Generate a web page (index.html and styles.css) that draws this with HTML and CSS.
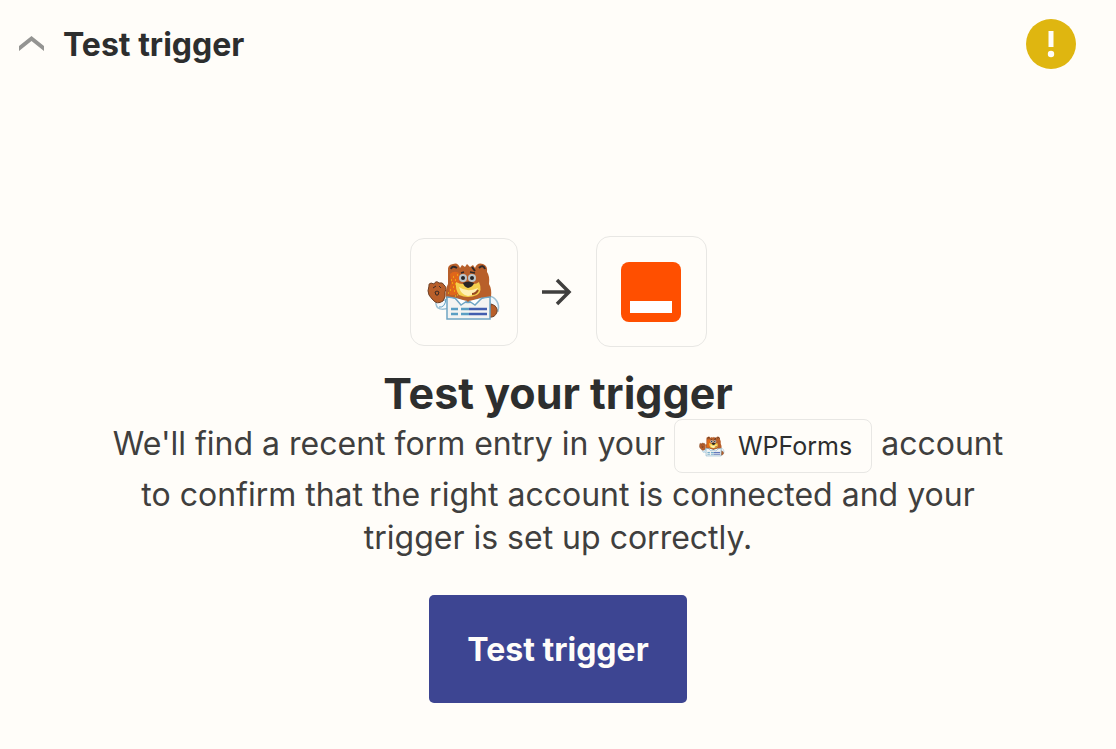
FILE: index.html
```
<!DOCTYPE html>
<html lang="en">
<head>
    <meta charset="UTF-8">
    <meta name="viewport" content="width=device-width, initial-scale=1.0">
    <title>Test trigger</title>
    <link rel="stylesheet" href="styles.css">
</head>
<body>
    <!-- bear logo, used in the card and in the account chip -->
    <svg class="defs" aria-hidden="true">
        <symbol id="bear" viewBox="0 0 74 60">
            <path d="M9 39 C8 48 16 49 23 45 L23 35 L18 38 Z M62 34 C69 35 73 42 71 49 L64 46 Z" fill="#f4f8fa" stroke="#9cc1d5" stroke-width="1.5"/>
            <path d="M12 45 Q18 46 19 37" fill="none" stroke="#5a9fc4" stroke-width="1"/>
            <path d="M64 42 Q71 44 70 50 Q68 56 62 55 Z" fill="#b85f2a" stroke="#6d4027" stroke-width="1"/>
            <path d="M2 24 Q1 22 4 21 L7 22 Q9 18 12 21 Q16 20 17 23 Q20 25 18 30 Q19 35 16 39 Q10 43 6 38 Q4 36 2 33 Q0 29 2 24 Z" fill="#b85f2a" stroke="#6d4027" stroke-width="1"/>
            <path d="M6 26 L9 24 M12 24 L14 26 M8 30 Q10 28 12 30 L11 33 L9 33 Z" fill="none" stroke="#3a2a25" stroke-width="1"/>
            <path d="M21 9 Q20 3 26 2 Q31 0 33 6 L35 3 L38 5 L40 2 L43 5 L46 3 L48 6 Q50 0 56 2 Q61 4 60 10 Q63 14 62 22 Q65 27 64 35 Q55 41 42 41 Q28 40 19 36 Q18 27 21 22 Z" fill="#b85f2a"/>
            <path d="M23 12 Q27 8 32 11 L33 29 Q30 34 23 33 Q21 27 24 21 Z" fill="#e0661a"/>
            <path d="M24 7 Q25 3 30 6 M52 6 Q56 2 58 7 M45 5 L48 9" fill="none" stroke="#30292a" stroke-width="2"/>
            <path d="M29 20 Q36 24 41 20 Q47 24 52 20 Q56 29 50 33 Q41 37 32 33 Q28 27 29 20 Z" fill="#f4cf4d"/>
            <path d="M32 25 Q40 31 51 26 Q49 33 41 34 Q34 33 32 25 Z" fill="#fff0b5"/>
            <circle cx="36" cy="16" r="4" fill="#bcc6cb"/>
            <circle cx="45" cy="16" r="4" fill="#bcc6cb"/>
            <circle cx="36" cy="16" r="2" fill="#262424"/>
            <circle cx="45" cy="16" r="2" fill="#262424"/>
            <path d="M34 11 L37 10 M43 10 L48 11" stroke="#30292a" stroke-width="1.5"/>
            <path d="M36 21 Q41 18 47 21 Q46 25 41 26 Q37 25 36 21 Z" fill="#292525"/>
            <path d="M45 32 Q49 32 51 28" fill="none" stroke="#9a4a20" stroke-width="2"/>
            <path d="M26 15h1M30 13h1M28 18h1M25 21h1M28 22h1M26 25h1M27 29h1M23 28h1M30 33h1M28 34h1M21 31h1M24 18h1" stroke="#ffdc00" stroke-width="1"/>
            <path d="M20 35 Q30 36 35 39 Q41 42 47 39 Q53 36 63 35 V57 H20 Z" fill="#f4f4f2" stroke="#6fa5c4" stroke-width="1.5"/>
            <path d="M28 36 L34 43 L40 39 M42 39 L48 43 L55 36" fill="#fff" stroke="#6fa5c4" stroke-width="1.5"/>
            <path d="M24 47 H31 M34 47 H42 M24 52 H31 M34 52 H42" stroke="#5a9fc4" stroke-width="2.5"/>
            <path d="M42 47 H60 M42 52 H60" stroke="#425eaf" stroke-width="2.5"/>
        </symbol>
    </svg>

    <header class="header">
        <h2>
            <button class="toggle" type="button" aria-expanded="true">
                <svg class="chevron" viewBox="0 0 26 16" aria-hidden="true">
                    <path d="M0 10 L12.500 0 L25 10 V15 L12.500 5 L0 15 Z" fill="#949492"/>
                </svg>
                Test trigger
            </button>
        </h2>
        <svg class="warning" viewBox="0 0 50 50" role="img" aria-label="Warning">
            <circle cx="25" cy="25" r="25" fill="#dfb610"/>
            <path d="M22.500 12 H27.500 V28 H22.500 Z" fill="#fffdf9"/>
            <circle cx="25" cy="35" r="3.200" fill="#fffdf9"/>
        </svg>
    </header>

    <main class="content">
        <div class="apps">
            <div class="card">
                <svg class="bear" aria-hidden="true"><use href="#bear"/></svg>
            </div>
            <svg class="arrow" viewBox="0 0 30 28" aria-hidden="true">
                <path d="M0 14 H27 M15 2 L27 14 L15 26" fill="none" stroke="#403f3e" stroke-width="3.500"/>
            </svg>
            <div class="card card-large">
                <svg class="interface" viewBox="0 0 60 60" aria-hidden="true">
                    <rect width="60" height="60" rx="8" fill="#ff4f00"/>
                    <path d="M9 39 H51 V51 H9 Z" fill="#fff"/>
                </svg>
            </div>
        </div>

        <h1>Test your trigger</h1>
        <p class="text">We'll find a recent form entry in your
            <span class="chip"><svg class="small-bear" aria-hidden="true"><use href="#bear"/></svg>WPForms</span>
            account to confirm that the right account is connected and your trigger is set up correctly.</p>

        <button class="submit" type="button">Test trigger</button>
    </main>
</body>
</html>
```
FILE: styles.css
```
*{
    padding: 0;
    margin: 0;
    box-sizing: border-box;
}
body{
    background-color: #fffdf9;
    color: #2d2e2e;
    font-family: Inter, sans-serif;
}
button{
    border: none;
    font-family: inherit;
    font-size: 32px;
    font-weight: 700;
    cursor: pointer;
}
.defs{
    display: none;
}
.header{
    display: flex;
    justify-content: space-between;
    align-items: center;
    padding: 19px 40px 0 19px;
}
.toggle{
    display: flex;
    align-items: center;
    gap: 18px;
    background: none;
    color: #2d2e2e;
}
.chevron{
    width: 26px;
    height: 16px;
}
.warning{
    width: 50px;
    height: 50px;
}
.content{
    display: flex;
    flex-direction: column;
    align-items: center;
    padding: 167px 100px 40px;
    text-align: center;
}
.apps{
    display: flex;
    align-items: center;
    gap: 24px;
}
.card{
    display: flex;
    justify-content: center;
    align-items: center;
    width: 108px;
    height: 108px;
    border: 1px solid #e8e7e4;
    border-radius: 14px;
}
.card-large{
    width: 111px;
    height: 111px;
}
.bear{
    width: 74px;
    height: 60px;
}
.interface{
    width: 60px;
    height: 60px;
}
.arrow{
    width: 30px;
    height: 28px;
}
h1{
    margin-top: 20px;
    font-size: 43px;
    font-weight: 700;
    line-height: 52px;
}
.text{
    max-width: 916px;
    color: #403f3e;
    font-size: 32px;
    line-height: 43px;
}
.chip{
    display: inline-flex;
    align-items: center;
    gap: 13px;
    height: 54px;
    padding: 0 19px 0 24px;
    border: 1px solid #e8e7e4;
    border-radius: 8px;
    color: #2d2e2e;
    font-size: 25px;
    vertical-align: middle;
}
.small-bear{
    width: 26px;
    height: 21px;
}
.submit{
    height: 108px;
    margin-top: 36px;
    padding: 0 38px;
    border-radius: 5px;
    background-color: #3d4592;
    color: #fffdf9;
}
```
